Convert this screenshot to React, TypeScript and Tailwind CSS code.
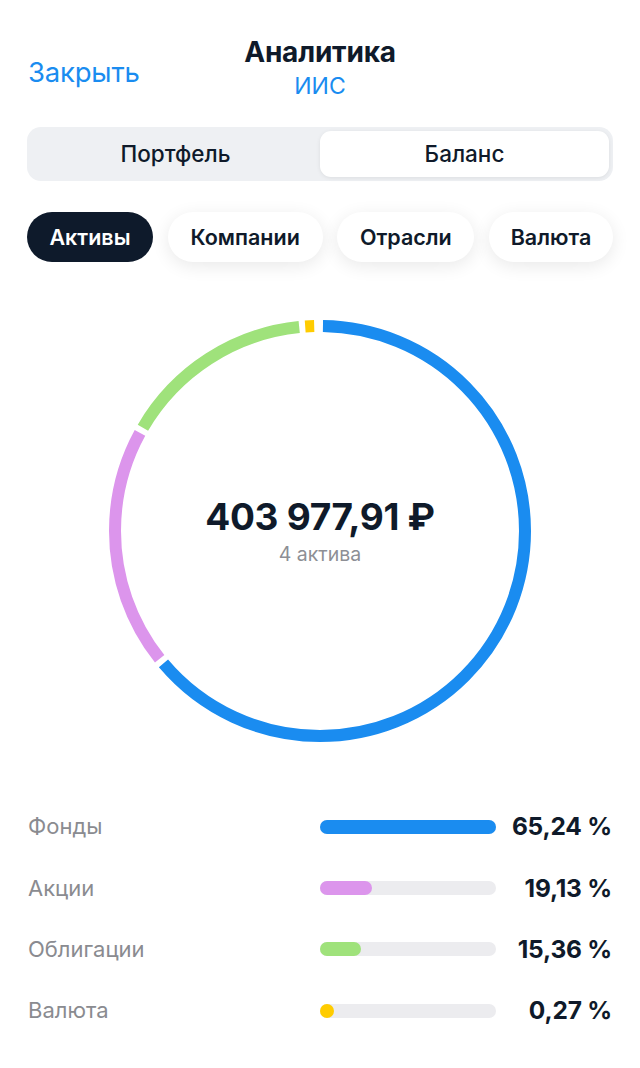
import React from 'react';

const segments = [
  { label: 'Фонды', value: 65.24, color: '#1a8cf0', text: '65,24 %' },
  { label: 'Акции', value: 19.13, color: '#dc95ec', text: '19,13 %' },
  { label: 'Облигации', value: 15.36, color: '#9fe27b', text: '15,36 %' },
  { label: 'Валюта', value: 0.27, color: '#ffcc00', text: '0,27 %' },
];

const chips = [
  { label: 'Активы', width: 'w-[126px]', active: true },
  { label: 'Компании', width: 'w-[155px]', active: false },
  { label: 'Отрасли', width: 'w-[137px]', active: false },
  { label: 'Валюта', width: 'w-[124px]', active: false },
];

const Donut: React.FC = () => {
  const size = 422;
  const stroke = 12;
  const r = (size - stroke) / 2;
  const c = 2 * Math.PI * r;
  const gap = 6;
  const minLen = 9;
  const total = segments.reduce((s, x) => s + x.value, 0);
  const avail = c - gap * segments.length;
  let pos = gap / 2;

  return (
    <svg width={size} height={size} viewBox={`0 0 ${size} ${size}`} className="-rotate-90">
      {segments.map((s, i) => {
        const len = Math.max(minLen, (s.value / total) * (avail - minLen));
        const el = (
          <circle
            key={i}
            cx={size / 2}
            cy={size / 2}
            r={r}
            fill="none"
            stroke={s.color}
            strokeWidth={stroke}
            strokeDasharray={`${len} ${c - len}`}
            strokeDashoffset={-pos}
          />
        );
        pos += len + gap;
        return el;
      })}
    </svg>
  );
};

export default function App() {
  const max = Math.max(...segments.map((s) => s.value));
  return (
    <div className="w-[640px] h-[1068px] overflow-hidden bg-white font-['Inter',sans-serif] text-[#0f1a2a]">
      <header className="grid grid-cols-[1fr_auto_1fr] px-[28px] pt-[36px]">
        <div className="mt-[20px] text-[27.5px] leading-[32px] text-[#1a8cf0] tracking-[-0.2px]">Закрыть</div>
        <div className="flex flex-col items-center">
          <div className="text-[28px] leading-[32px] font-bold tracking-[-0.2px]">Аналитика</div>
          <div className="mt-[4px] text-[23px] leading-[28px] text-[#1a8cf0]">ИИС</div>
        </div>
        <div />
      </header>

      <div className="mx-[27px] mt-[27px] flex h-[54px] rounded-[14px] bg-[#eef0f3] p-[4px]">
        <div className="flex flex-1 items-center justify-center text-[22.5px] font-medium">Портфель</div>
        <div className="flex flex-1 items-center justify-center rounded-[11px] bg-white text-[22.5px] font-medium shadow-[0_1px_4px_rgba(0,0,0,0.08)]">
          Баланс
        </div>
      </div>

      <div className="mx-[27px] mt-[31px] flex h-[50px] justify-between">
        {chips.map((c) => (
          <div
            key={c.label}
            className={`${c.width} flex items-center justify-center rounded-full text-[21.5px] font-semibold ${
              c.active ? 'bg-[#0e1a2b] text-white' : 'bg-white text-[#0f1a2a] shadow-[0_4px_18px_rgba(0,0,0,0.09)]'
            }`}
          >
            {c.label}
          </div>
        ))}
      </div>

      <div className="relative mx-auto mt-[58px] h-[422px] w-[422px]">
        <Donut />
        <div className="absolute inset-0 flex flex-col items-center justify-center">
          <div className="text-[37px] leading-[42px] font-bold tracking-[-0.3px]">403 977,91 ₽</div>
          <div className="mt-[4px] text-[19.5px] leading-[24px] text-[#8d8f95]">4 актива</div>
        </div>
      </div>

      <div className="mt-[54px] flex flex-col px-[28px]">
        {segments.map((s) => (
          <div key={s.label} className="flex h-[61.4px] items-center">
            <div className="w-[292px] text-[22px] text-[#8a8b90]">{s.label}</div>
            <div className="h-[14px] w-[176px] rounded-full bg-[#ececef]">
              <div
                className="h-full rounded-full"
                style={{ width: Math.max(14, (s.value / max) * 176), background: s.color }}
              />
            </div>
            <div className="flex-1 text-right text-[24.5px] font-bold tracking-[-0.2px]">{s.text}</div>
          </div>
        ))}
      </div>
    </div>
  );
}
